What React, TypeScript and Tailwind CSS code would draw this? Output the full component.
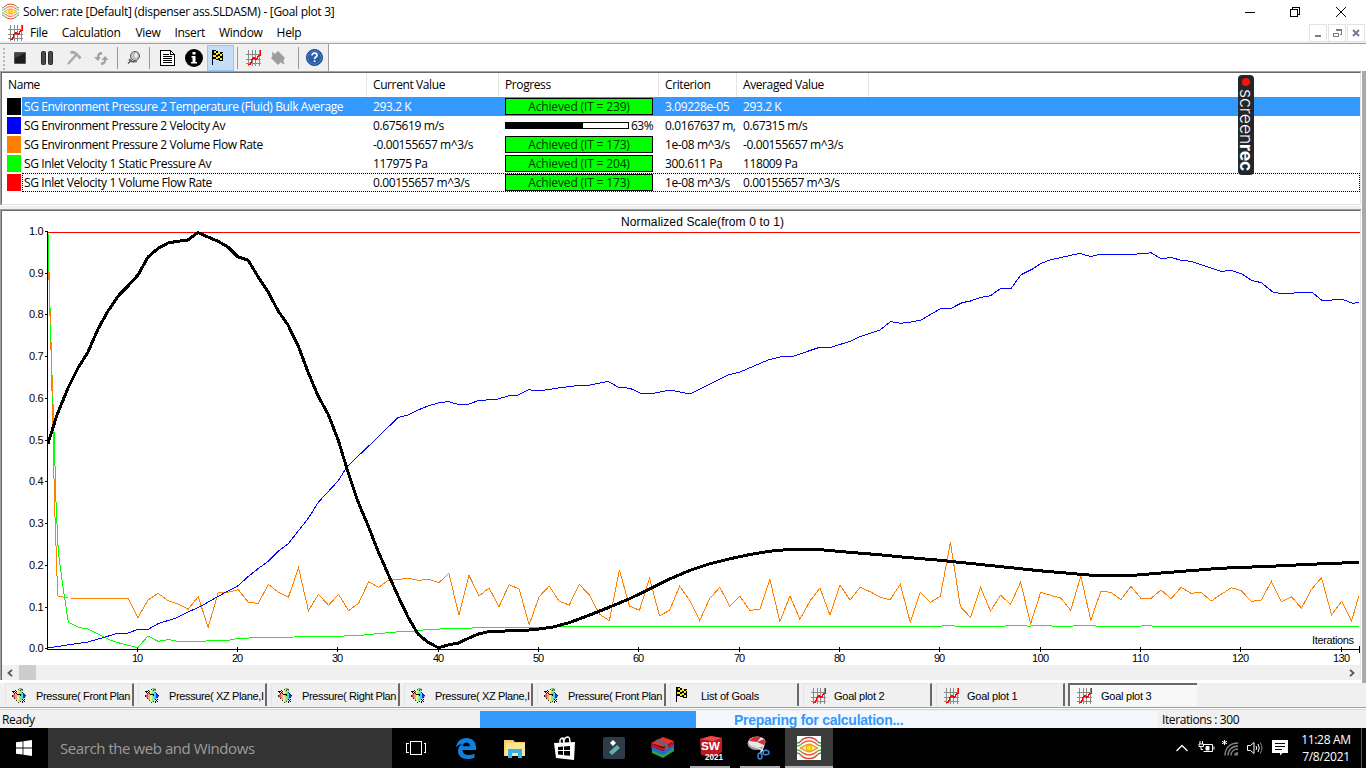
import React from "react";

type Pt = [number, number];

const x0 = 47.7;
const step = 10.03;
const iterX = (i: number) => x0 + (i - 1) * step;
const toPoints = (pts: Pt[]) => pts.map((p) => p.join(",")).join(" ");

const temperature: Pt[] = [
  [48, 443.5], [57, 415], [68, 388], [78, 368], [88, 352], [98, 329], [108, 311], [119, 295], [128, 286], [138, 275], [148, 257],
  [158, 248.5], [168, 243], [178, 241.2], [188, 240], [198, 232.5], [208, 237], [218, 241.3], [228, 247], [238, 257], [248, 260],
  [258, 276.7], [268, 291.7], [278, 310.7], [288, 325], [298.5, 346.7], [308, 372], [318, 395.7], [328.5, 415], [338.5, 441],
  [348, 472], [358, 501.7], [368.5, 526.7], [378, 551], [388.5, 575], [398.5, 597], [408.5, 618], [418, 634], [428, 642.3],
  [438.4, 647.7], [448, 645], [458.5, 643], [468, 638.5], [478.5, 634], [488.5, 631.7], [508, 630.9], [529, 630], [539, 629],
  [553, 627], [569, 622.7], [589, 615.3], [609, 607.3], [629, 599], [649, 589.3], [669, 579.3], [689, 570.7], [709, 564],
  [729, 559], [749, 554.7], [769, 551.3], [787, 549.6], [818, 549.5], [839, 551.4], [880, 554.8], [900, 556.8], [940, 560.3],
  [990, 565.5], [1040, 570.8], [1090, 575.1], [1133, 575.3], [1170, 572.3], [1220, 568.3], [1270, 566.3], [1310, 564.3], [1359, 562.3],
];

const velocity: Pt[] = [
  [48, 648], [67, 645], [88, 642], [117, 633.5], [127, 633.5], [137.5, 629.5], [148, 629.5], [158, 623.7], [177, 617.7], [188, 612],
  [200, 606.7], [211.7, 600], [226.7, 591.7], [237.7, 586], [248, 576.7], [258, 568.7], [267.7, 561.7], [277.7, 551.7], [288, 544],
  [308.3, 518.3], [318.3, 502.3], [338.3, 480.7], [347, 466.7], [375, 440], [398, 417.5], [408, 415], [418, 410], [428, 406],
  [438, 403], [448, 401.5], [458, 404.3], [468, 404.5], [478, 400.7], [498, 399], [508, 396], [518, 395], [529, 389.7], [539, 391],
  [558, 388], [578, 385.5], [590, 385], [608, 381.3], [618, 387], [630, 388.3], [640, 393], [650, 394], [662, 391.7], [670, 390],
  [690, 394], [700, 389], [728, 375], [740, 372], [768, 360], [780, 357], [793, 356.3], [801.7, 353.5], [810, 350.5], [819, 347.5],
  [830.4, 347.5], [851, 341], [860.3, 336.5], [880, 330], [890.6, 321.5], [900.3, 323.3], [910.8, 322], [921, 320], [940.7, 308.5],
  [950.8, 308.5], [962, 302.7], [970.6, 301], [980, 297.5], [990.4, 295.7], [1000.5, 288.5], [1011, 288.5], [1021, 274.7],
  [1032, 269.3], [1040.5, 263.7], [1049.8, 260], [1079.7, 253.3], [1091, 256.7], [1098.4, 254.5], [1126.4, 254.5], [1147, 253.5],
  [1150.7, 252.5], [1161, 258.7], [1171, 257.5], [1181.7, 260.4], [1191, 261.3], [1221, 271.4], [1231, 270.5], [1241.5, 273.7],
  [1251.6, 280.3], [1261.3, 282.7], [1273.3, 292.4], [1280.7, 293.4], [1312.5, 292.5], [1322, 300.5], [1342.4, 299.5], [1353, 303.3],
  [1359, 302.5],
];

const flowFrom9 = [
  598.3, 617.7, 600, 593.3, 600.7, 604, 609.3, 596.7, 627.3, 592.7, 592.3, 589.7, 602.3, 603.3, 584.3, 592.3, 597.3, 567.7, 610.7,
  594.3, 605.3, 594.3, 610.7, 603.3, 581.7, 587.3, 580, 579.3, 578.3, 580.3, 579.3, 582.7, 573.3, 615, 575.3, 596, 588, 606.7, 584.7,
  589, 624.7, 596.7, 586, 601.3, 605, 584.3, 595, 614, 620.7, 570, 606, 610.3, 578.3, 615.7, 610.3, 586.3, 600, 620.7, 598.7, 587.3,
  606, 596.3, 610.3, 609.3, 579.3, 621.7, 596, 619.3, 601, 588, 615.3, 585.3, 600, 587.3, 591.7, 597.3, 599.7, 584.3, 622.3, 592.3,
  602.3, 596.3, 542.3, 606.7, 617.3, 587.3, 611, 595.3, 604.3, 582.3, 623.7, 592.3, 595.3, 598, 610.3, 576, 620.3, 591.3, 592.3,
  599.7, 586.3, 598.3, 598.3, 590, 598.7, 587.3, 593.3, 592.3, 601, 594.3, 587.7, 590.7, 601.3, 600, 581.3, 602, 596.7, 608.3, 589.3,
  577.7, 614.7, 601.3, 620.7,
];

const flow: Pt[] = [
  [48, 233], [49, 280], [51, 350], [53, 430], [54.5, 502], [57.7, 596], [68, 598],
  ...flowFrom9.map((y, k): Pt => [iterX(9 + k), y]),
  [1359, 595.7],
];

const pressure: Pt[] = [
  [48, 233], [49.5, 290], [52, 375], [54.3, 440], [56, 502], [58.3, 551.7], [62, 580], [68.3, 622.3], [78.3, 627.3], [88.3, 629],
  [98.3, 634], [108.3, 639.3], [118.3, 642.7], [128.3, 645.3], [137.7, 647.7], [148, 636], [158.3, 641.4], [168.3, 639.5],
  [178.3, 641.5], [201.7, 641.5], [210, 640.5], [228, 640.5], [238.3, 638.4], [261.7, 637.5], [333, 636.4], [360, 635.4], [393, 632.2],
  [415, 631], [428, 629.4], [451.7, 628.6], [486.7, 627.6], [540, 627.3], [567, 626.5], [941, 626.5], [943, 625.5], [954, 625.5],
  [956, 626.5], [1004, 626.5], [1006, 625.5], [1026, 625.5], [1028, 626.5], [1034, 625.5], [1051, 625.5], [1053, 626.5],
  [1072, 626.5], [1074, 625.5], [1095, 625.5], [1097, 626.5], [1140, 626.5], [1142, 625.5], [1151, 625.5], [1153, 626.5], [1359, 626.5],
];

const yTicks = Array.from({ length: 11 }, (_, k) => ({ label: (1 - k / 10).toFixed(1), y: 231.3 + k * 41.75 }));
const xTicks = Array.from({ length: 13 }, (_, k) => ({ label: String((k + 1) * 10), x: Math.floor(137.2 + k * 100.33) + 0.5 }));

function GoalChart() {
  return (
    <svg width="1358" height="454" viewBox="2 211 1358 454" className="block shrink-0 font-['Liberation_Sans',sans-serif] text-[11px] tracking-normal">
      <text x="621" y="226" fontSize="12" textLength="163">Normalized Scale(from 0 to 1)</text>
      <g shapeRendering="crispEdges" fill="none" stroke="#000" strokeWidth="1">
        <path d="M47.5 231V649.5H1359.5M1359.5 646V653" />
        {yTicks.map((t) => <path key={t.label} d={`M45 ${Math.floor(t.y) + 0.5}H48`} />)}
        {xTicks.map((t) => <path key={t.label} d={`M${t.x} 647V652`} />)}
        <path d="M48 232.5H1360" stroke="#f00" />
        <polyline points={toPoints(flow)} stroke="#ff8000" />
        <polyline points={toPoints(pressure)} stroke="#0f0" />
        <path d="M49.5 281V287M50.500 312V323M51.500 344V359M52.500 378V395M53.500 412V424" stroke="#ff8000" />
        <polyline points={toPoints(velocity)} stroke="#00f" />
        <polyline points={toPoints(temperature)} strokeWidth="3" strokeLinejoin="round" />
      </g>
      {yTicks.map((t) => <text key={t.label} x="43.5" y={Math.floor(t.y) + 4} textAnchor="end" textLength="14.5">{t.label}</text>)}
      {xTicks.map((t) => (
        <text key={t.label} x={t.x} y="662" textAnchor="middle" textLength={t.label.length === 2 ? 11 : 17}>{t.label}</text>
      ))}
      <text x="1312" y="644" textLength="42">Iterations</text>
    </svg>
  );
}

function FlowEye({ size }: { size: number }) {
  return (
    <svg width={size} height={size} viewBox="0 0 24 24" fill="none" strokeWidth="1.4" className="shrink-0">
      <path d="M4 4.800Q7 1.500 12 1.500T20 4.800" stroke="#e03c2c" />
      <path d="M4 8.500Q7.500 5 12 5T20 8.500" stroke="#f0602c" />
      <path d="M3 12C7 11 8 8.300 12 8.300S17 11 21 12C17 13 16 15.700 12 15.700S7 13 3 12Z" stroke="#f09a2c" fill="#fff8c0" />
      <path d="M4 15.500Q7.500 19 12 19T20 15.500" stroke="#f0602c" />
      <path d="M4 19.200Q7 22.500 12 22.500T20 19.200" stroke="#e03c2c" />
      <path d="M0 7Q2.500 7 4 4.800M20 4.800Q21.500 7 24 7M0 17Q2.500 17 4 19.200M20 19.200Q21.500 17 24 17" stroke="#3c9a4c" />
      <path d="M0 10Q2.500 10 4 8.500M20 8.500Q21.500 10 24 10M0 14Q2.500 14 4 15.500M20 15.500Q21.500 14 24 14" stroke="#5cb04c" />
      <circle cx="12" cy="12" r="2.800" fill="#ffe600" stroke="#d0a800" strokeWidth=".8" />
    </svg>
  );
}

function PlotIcon() {
  return (
    <svg width="16" height="16" viewBox="0 0 16 16" fill="none" shapeRendering="crispEdges" className="shrink-0">
      <path d="M2.500 0V16M6.500 0V16M9.500 0V16M13.500 0V16M0 4.500H15M0 9.500H15M0 13.500H15" stroke="#8a8a8a" />
      <path d="M1.500 14.500H4.500V12.500H5.500V9.500H6.500V8.500H7.500V7.500H8.500V8.500H9.500V9.500H10.500V8.500H11.500V6.500H12.500V5.500H14.500V0" stroke="#f00" />
    </svg>
  );
}

function FlagIcon() {
  return (
    <svg width="16" height="16" viewBox="0 0 16 16" shapeRendering="crispEdges" className="shrink-0">
      <path d="M2 0H6V1H8V2H13V11H9V10H6V9H3V15H2Z" fill="#000" />
      <path d="M4 1h2v2H4zM8 2h2v2H8zM6 3h2v2H6zM10 4h2v2h-2zM3 5h1v2H3zM4 5h2v2H4zM8 6h2v2H8zM6 7h2v2H6zM10 8h2v2h-2zM12 3h1v1h-1z" fill="#f5e820" />
    </svg>
  );
}

function CutPlotIcon() {
  return (
    <svg width="16" height="16" viewBox="0 0 16 16" className="shrink-0">
      <path d="M1 8L4 5V11Z" fill="#f04848" />
      <path d="M4 5L6 3V13L4 11Z" fill="#ff9c88" />
      <path d="M6 3L8 1V15L6 13Z" fill="#f4f070" />
      <path d="M8 1L10 3V13L8 15Z" fill="#80f090" />
      <path d="M10 3L12 5V11L10 13Z" fill="#40d8f0" />
      <path d="M12 5L15 8L12 11Z" fill="#1830f0" />
      <g shapeRendering="crispEdges" fill="none" stroke="#000">
        <path d="M1 8L8 1L15 8L8 15Z" strokeWidth=".8" strokeDasharray="1.500 1.200" />
        <path d="M1 3.500H3.500L6 6H8.500L10 8M5 2L2 5M11 11L14 14M14 11L11 14.500" />
      </g>
      <path d="M8 0L10 2L12 3V1Z" fill="#187830" />
    </svg>
  );
}

const Sep = () => <div className="h-[22px] w-px shrink-0 bg-[#999]" />;

function ToolButton({ children, active = false }: { children: React.ReactNode; active?: boolean }) {
  return (
    <button className={`flex h-[26px] w-[27px] shrink-0 items-center justify-center ${active ? "border border-[#90c8f6] bg-[#c4def5]" : ""}`}>
      {children}
    </button>
  );
}

function Toolbar() {
  return (
    <div className="flex h-[27px] w-full shrink-0 bg-white">
      <div className="flex w-[329px] items-center border-r border-[#a0a0a0] bg-[#f0f0f0]">
        <svg width="6" height="26" className="shrink-0" shapeRendering="crispEdges">
          <path d="M4 3V26" stroke="#b8b8b8" strokeWidth="2" strokeDasharray="2 2" />
        </svg>
        <ToolButton>
          <svg width="12" height="12" viewBox="0 0 12 12"><rect width="12" height="12" rx="1" fill="#555" /><rect x="1" y="1" width="10" height="10" fill="#1c1c1c" /><path d="M1 1H11L1 6Z" fill="#444" /></svg>
        </ToolButton>
        <ToolButton>
          <svg width="12" height="14" viewBox="0 0 12 14" fill="#484848" stroke="#292929"><rect x=".5" y=".5" width="4" height="13" rx="1" /><rect x="7.500" y=".5" width="4" height="13" rx="1" /></svg>
        </ToolButton>
        <ToolButton>
          <svg width="16" height="16" viewBox="0 0 16 16" fill="none" stroke="#a8a8a8"><path d="M2 14L10 5" strokeWidth="2.400" /><path d="M4.500 2.500C8 1.500 10 3 14.500 8.500" strokeWidth="2.800" /></svg>
        </ToolButton>
        <ToolButton>
          <svg width="16" height="16" viewBox="0 0 16 16" fill="#a0a0a0"><path d="M9 2Q4 2 4 7H1L5 11L8 7H6Q6 4.500 9 4.500ZM8 15Q13 15 13 10H15.500L12 6L8.500 10H11Q11 12.500 8 12.500Z" /></svg>
        </ToolButton>
        <div className="w-[3px]" />
        <Sep />
        <div className="w-[3px]" />
        <ToolButton>
          <svg width="14" height="14" viewBox="0 0 14 14"><circle cx="8" cy="5" r="4.500" fill="#c8c8c8" stroke="#555" /><ellipse cx="9" cy="4.500" rx="2" ry="3" fill="#f4f4f4" stroke="#888" strokeWidth=".6" /><path d="M4.500 9L1 12.500M2 8Q5 12 10 10.500" stroke="#555" strokeWidth="1.300" fill="none" /></svg>
        </ToolButton>
        <div className="w-[2px]" />
        <Sep />
        <div className="w-[3px]" />
        <ToolButton>
          <svg width="15" height="16" viewBox="0 0 15 16" shapeRendering="crispEdges" className="ml-0.5"><path d="M.5 .5H10.500L14.500 4.500V15.500H.5Z" fill="#fff" stroke="#000" /><path d="M10.500 0V4.500H15M3 4.500H9M3 6.500H12M3 8.500H12M3 10.500H12M3 12.500H12" stroke="#000" fill="none" /></svg>
        </ToolButton>
        <ToolButton>
          <svg width="18" height="18" viewBox="0 0 18 18"><circle cx="9" cy="9" r="9" fill="#000" /><path d="M7.500 3H10.500V5.500H7.500ZM6.500 7H10.500V13H12V14.500H6V13H7.500V8.500H6.500Z" fill="#fff" /></svg>
        </ToolButton>
        <ToolButton active>
          <div className="mr-1.5"><FlagIcon /></div>
        </ToolButton>
        <div className="w-[3px]" />
        <Sep />
        <div className="w-[3px]" />
        <ToolButton><PlotIcon /></ToolButton>
        <div className="-ml-[3px] flex">
          <ToolButton>
            <svg width="16" height="16" viewBox="0 0 16 16" fill="#9d9d9d" stroke="#9d9d9d"><path d="M1.500 8L8 1.500L14.500 8L8 14.500Z" /><path d="M2 2.500L5 5M11 11.500L14 14M3 3V7M13 9V13" strokeWidth="1.500" /></svg>
          </ToolButton>
        </div>
        <div className="w-[7px]" />
        <Sep />
        <div className="w-[2px]" />
        <ToolButton>
          <svg width="17" height="17" viewBox="0 0 17 17"><circle cx="8.500" cy="8.500" r="8" fill="#2a5ca8" stroke="#173f80" /><circle cx="8.500" cy="8.500" r="6.800" fill="none" stroke="#6f9bd4" strokeWidth=".6" /><path d="M6 6.500Q6 4.200 8.500 4.200T11 6.500Q11 7.500 9.500 8.300Q8.700 8.800 8.700 10M8.600 11.300V13" fill="none" stroke="#fff" strokeWidth="1.700" /></svg>
        </ToolButton>
      </div>
    </div>
  );
}

interface Goal { color: string; name: string; current: string; progress: string; criterion: string; averaged: string }

const goals: Goal[] = [
  { color: "bg-black", name: "SG Environment Pressure 2 Temperature (Fluid) Bulk Average", current: "293.2 K", progress: "Achieved (IT = 239)", criterion: "3.09228e-05", averaged: "293.2 K" },
  { color: "bg-[#0000ff]", name: "SG Environment Pressure 2 Velocity Av", current: "0.675619 m/s", progress: "63%", criterion: "0.0167637 m,", averaged: "0.67315 m/s" },
  { color: "bg-[#ff8000]", name: "SG Environment Pressure 2 Volume Flow Rate", current: "-0.00155657 m^3/s", progress: "Achieved (IT = 173)", criterion: "1e-08 m^3/s", averaged: "-0.00155657 m^3/s" },
  { color: "bg-[#00ff00]", name: "SG Inlet Velocity 1 Static Pressure Av", current: "117975 Pa", progress: "Achieved (IT = 204)", criterion: "300.611 Pa", averaged: "118009 Pa" },
  { color: "bg-[#ff0000]", name: "SG Inlet Velocity 1 Volume Flow Rate", current: "0.00155657 m^3/s", progress: "Achieved (IT = 173)", criterion: "1e-08 m^3/s", averaged: "0.00155657 m^3/s" },
];

const headCell = "flex items-center border-r border-[#e5e5e5] pl-1.5";

function GoalTable() {
  return (
    <div className="h-[131px] shrink-0 bg-white tracking-[-0.4px]">
      <div className="flex h-6">
        <div className={`${headCell} w-[365px]`}>Name</div>
        <div className={`${headCell} w-[132px]`}>Current Value</div>
        <div className={`${headCell} w-[160px]`}>Progress</div>
        <div className={`${headCell} w-[78px]`}>Criterion</div>
        <div className={`${headCell} w-[132px]`}>Averaged Value</div>
      </div>
      {goals.map((g, i) => (
        <div key={g.name} className="flex h-[19px] pl-[5px]">
          <div className={`mt-px h-[17px] w-[14px] shrink-0 ${g.color}`} />
          <div className={`ml-px flex min-w-0 flex-1 items-center whitespace-nowrap ${i === 0 ? "bg-[#3399ff] text-white" : ""} ${i === 4 ? "outline outline-dotted outline-black -outline-offset-1" : ""}`}>
            <div className="w-[351px] shrink-0 pl-[2px]">{g.name}</div>
            <div className="w-[132px] shrink-0">{g.current}</div>
            <div className="w-[160px] shrink-0 text-black">
              {g.progress === "63%" ? (
                <div className="flex items-center">
                  <div className="h-[7px] w-[124px] border border-black bg-white"><div className="h-full w-[77px] bg-black" /></div>
                  <span className="ml-0.5 tracking-[-0.5px]">63%</span>
                </div>
              ) : (
                <div className="flex h-[17px] w-[148px] items-center justify-center border border-black bg-[#00ff00] tracking-[-0.15px] text-[#003800]">{g.progress}</div>
              )}
            </div>
            <div className="w-[78px] shrink-0">{g.criterion}</div>
            <div>{g.averaged}</div>
          </div>
        </div>
      ))}
    </div>
  );
}

const tabs = [
  { icon: "cut", label: "Pressure( Front Plan" },
  { icon: "cut", label: "Pressure( XZ Plane,I" },
  { icon: "cut", label: "Pressure( Right Plan" },
  { icon: "cut", label: "Pressure( XZ Plane,I" },
  { icon: "cut", label: "Pressure( Front Plan" },
  { icon: "flag", label: "List of Goals" },
  { icon: "plot", label: "Goal plot 2" },
  { icon: "plot", label: "Goal plot 1" },
  { icon: "plot", label: "Goal plot 3" },
];

function TabStrip() {
  return (
    <div className="flex h-[24px] shrink-0 gap-1 bg-[#f0f0f0] pl-[5px] font-['Liberation_Sans',sans-serif] text-[11px]">
      {tabs.map((t, i) => (
        <div
          key={i}
          className={`flex h-[23px] w-[129px] shrink-0 items-center whitespace-nowrap pt-px pl-[5px] ${
            i === 8 ? "ml-[-1px] border-t-2 border-l-2 border-[#696969] bg-[#f8f8f8]" : "border-t border-r-2 border-l border-t-[#e3e3e3] border-r-[#696969] border-l-[#e3e3e3]"
          }`}
        >
          {t.icon === "cut" ? <CutPlotIcon /> : t.icon === "flag" ? <span className="-mt-0.5 -ml-0.5 mr-0.5"><FlagIcon /></span> : <span className="ml-0.5"><PlotIcon /></span>}
          <span className={`${t.icon === "plot" ? (i === 8 ? "ml-2" : "ml-[7px]") : "ml-[9px]"} ${i < 5 ? "tracking-[-0.37px]" : "tracking-[-0.25px]"}`}>{t.label}</span>
        </div>
      ))}
    </div>
  );
}

function Taskbar() {
  return (
    <div className="flex h-10 shrink-0 bg-[#020203] text-white">
      <div className="flex w-12 items-center justify-center">
        <svg width="16" height="16" viewBox="0 0 16 16" fill="#fff"><path d="M0 2.300L6.600 1.400V7.600H0ZM7.400 1.300L16 0V7.600H7.400ZM0 8.400H6.600V14.600L0 13.700ZM7.400 8.400H16V16L7.400 14.700Z" /></svg>
      </div>
      <div className="flex w-[344px] items-center bg-[#333] pb-px pl-3 text-[15px] tracking-[-0.43px] text-[#9c9c9c]">Search the web and Windows</div>
      <div className="flex w-12 items-center justify-center">
        <svg width="20" height="14" viewBox="0 0 20 14" fill="none" stroke="#fff" shapeRendering="crispEdges"><path d="M4.500 .5H15.500V13.500H4.500ZM2.500 2.500H.5V11.500H2.500M17.500 2.500H19.500V11.500H17.500" /></svg>
      </div>
      <div className="flex w-[49px] items-center justify-center pl-0.5">
        <svg width="20" height="21" viewBox="0 0 20 21" fill="#0f7fe0"><path d="M0 9.500C1 3.500 4.500 0 10.500 0C16.500 0 20 4 20 9.500V12H6.500C6.700 15.500 9 17 12.500 17C15 17 17 16.300 18.500 15.400V19.500C16.500 20.500 14 21 11.500 21C5.500 21 2 17.500 2 13C2 9.500 4 7 7 5.700C4 6 1.500 7.300 0 9.500ZM6.700 8.300H13.800C13.800 5.900 12.500 4.600 10.400 4.600C8.500 4.600 7.100 6 6.700 8.300Z" /></svg>
      </div>
      <div className="flex w-[49px] items-center justify-center pl-0.5">
        <svg width="22" height="19" viewBox="0 0 22 19"><path d="M0 1H9L11 3H21V17H0Z" fill="#f7d06a" /><path d="M2 4H21V17H1Z" fill="#fde596" /><path d="M4 19V10H18V19H14V14H8V19Z" fill="#38b0e8" /></svg>
      </div>
      <div className="flex w-[49px] items-center justify-center pl-1">
        <svg width="22" height="24" viewBox="0 0 22 24"><path d="M6 7V4Q7 2 9 2L10 7M10 7V4Q11 1 14 1Q16 1 16 7" fill="none" stroke="#fff" strokeWidth="1.500" /><path d="M0 7L21 6L20 24L2 22Z" fill="#fff" /><path d="M4 11L9 10.500V14H4ZM10 10.400L16 10V14H10ZM4 15H9V19L4 18.500ZM10 15H16V19.800L10 19.200Z" fill="#000" /></svg>
      </div>
      <div className="flex w-[49px] items-center justify-center pl-1">
        <svg width="22" height="22" viewBox="0 0 22 22"><rect width="22" height="22" rx="2" fill="#2e3b48" /><path d="M7 6L10 3L13 6L10 9Z" fill="#fff" /><path d="M6 15L14 8L17 11L9 18Z" fill="#5fb5a5" /></svg>
      </div>
      <div className="flex w-[49px] items-center justify-center pl-1">
        <svg width="24" height="22" viewBox="0 0 24 22"><path d="M1 12L12 16L23 9V14L12 21L1 16Z" fill="#28a838" /><path d="M0 9L12 14L23 7V11L12 18L1 13Z" fill="#2468d8" /><path d="M0 6L12 11L23 4V8L12 14L1 10Z" fill="#b81820" /><path d="M0 6L12 0L23 4L12 10Z" fill="#e83038" /><path d="M7 2L17 7V12L14 13V9L4 4Z" fill="#666" /></svg>
      </div>
      <div className="flex w-[49px] flex-col items-center justify-end">
        <svg width="24" height="26" viewBox="0 0 24 26" className="mb-1 ml-0.5 tracking-normal"><path d="M1 3L12 0L23 2V16L15 21L2 19Z" fill="#c01820" /><path d="M1 3L12 0L23 2L14 5Z" fill="#f04848" /><text x="2" y="14" fontSize="11" fontWeight="bold" fill="#fff" textLength="19" lengthAdjust="spacingAndGlyphs" fontFamily="Liberation Sans">SW</text><text x="6" y="24" fontSize="9" fontWeight="bold" fill="#fff" textLength="18" lengthAdjust="spacingAndGlyphs" fontFamily="Liberation Sans">2021</text></svg>
        <div className="h-0.5 w-10 bg-[#aaa]" />
      </div>
      <div className="flex w-[51px] flex-col items-center justify-end">
        <svg width="24" height="24" viewBox="0 0 24 24" className="mb-1.5 -ml-0.5"><ellipse cx="9" cy="7.500" rx="8.500" ry="6.500" fill="#a0a0a8" /><ellipse cx="10" cy="6" rx="8.500" ry="5.500" fill="#e8e8e8" /><path d="M10 6L2 5Q6 -1 14 1ZM10 6L17 3Q19 6 17 9Z" fill="#d83038" /><path d="M5 9L17 15M17 9L13 18" stroke="#ddd" strokeWidth="1.600" /><ellipse cx="19" cy="16.500" rx="3" ry="2.300" fill="none" stroke="#3888d8" strokeWidth="1.500" /><ellipse cx="13" cy="20" rx="2" ry="3" fill="none" stroke="#3888d8" strokeWidth="1.500" /></svg>
        <div className="h-0.5 w-10 bg-[#aaa]" />
      </div>
      <div className="flex w-12 flex-col items-center justify-end bg-[#3c3c3c]">
        <div className="mb-1.5 bg-white"><FlowEye size={24} /></div>
        <div className="h-0.5 w-12 bg-[#b8b8b8]" />
      </div>
      <div className="ml-auto flex items-center">
        <svg width="12" height="8" viewBox="0 0 12 8" fill="none" stroke="#fff" strokeWidth="1.300"><path d="M.5 7L6 1.500L11.500 7" /></svg>
        <svg width="17" height="14" viewBox="0 0 17 14" className="ml-[10px]" fill="none" stroke="#fff"><path d="M6 3.500H14.500V10.500H5.500M16 5.500V8.500M2 0V3M4.500 0V3M1 3H5.500V5.500H1ZM3 6V8.500H5" /><path d="M8 5.500h3V9H8Z" fill="#fff" /></svg>
        <svg width="17" height="17" viewBox="0 0 17 17" className="ml-[7px]" fill="none"><path d="M2.500 0V5M0 1.200L5 3.800M5 1.200L0 3.800" stroke="#fff" /><path d="M3 15.500C3 8 8 3 16 3M6 15.500C6 10 10 6 16 6M9 15.500C9 11.500 12 9 16 9" stroke="#888" strokeWidth="1.300" /><path d="M12 15.500Q12 12 16 12V15.500Z" fill="#777" /></svg>
        <svg width="17" height="14" viewBox="0 0 17 14" className="ml-2" fill="none" stroke="#fff"><path d="M.5 4.500H3.500L7 1.500V12.500L3.500 9.500H.5Z" /><path d="M9 5Q10.500 7 9 9M11 3Q13.500 7 11 11" /><path d="M13 1.500Q17 7 13 12.500" stroke="#888" /></svg>
        <svg width="16" height="16" viewBox="0 0 16 16" className="ml-2"><path d="M0 0H16V13H10.500L8 15.500V13H0Z" fill="#fff" /><path d="M3 3.500H13M3 6.500H13M3 9.500H10" stroke="#000" /></svg>
        <div className="ml-[13px] flex w-[50px] flex-col items-center text-[12px] leading-[17px] tracking-[-0.3px] whitespace-nowrap">
          <div>11:28 AM</div>
          <div>7/8/2021</div>
        </div>
        <div className="ml-[10px] h-10 w-px bg-[#555]" />
        <div className="w-1" />
      </div>
    </div>
  );
}

const childButton = "flex h-[18px] w-[18px] items-center justify-center border border-[#e3e3e3]";

export default function App() {
  return (
    <div className="relative flex h-[768px] w-[1366px] flex-col overflow-hidden bg-white font-['Open_Sans','Noto_Sans',sans-serif] text-[12px] leading-4 tracking-[-0.3px] text-black">
      <div className="flex h-[23px] shrink-0 items-center pl-0.5">
        <FlowEye size={17} />
        <span className="ml-1">Solver: rate [Default] (dispenser ass.SLDASM) - [Goal plot 3]</span>
        <div className="ml-auto flex items-center pr-5">
          <svg width="10" height="10" shapeRendering="crispEdges"><path d="M0 5.500H10" stroke="#000" /></svg>
          <svg width="10" height="10" className="ml-[35px]" fill="none" stroke="#000" shapeRendering="crispEdges"><path d="M.5 2.500H7.500V9.500H.5ZM2.500 2V.5H9.500V7.500H8" /></svg>
          <svg width="10" height="10" className="ml-9" stroke="#000"><path d="M0 0L10 10M10 0L0 10" /></svg>
        </div>
      </div>
      <div className="flex h-[20px] shrink-0 items-center border-b-2 border-[#f0f0f0] pt-0.5 pl-2">
        <div className="w-[14px]"><PlotIcon /></div>
        <nav className="ml-2 flex gap-[14px] whitespace-nowrap">
          <span>File</span>
          <span>Calculation</span>
          <span className="ml-px">View</span>
          <span>Insert</span>
          <span>Window</span>
          <span>Help</span>
        </nav>
        <div className="ml-auto flex gap-px pr-px">
          <div className={childButton}><svg width="6" height="8"><path d="M0 7H6" stroke="#708090" strokeWidth="2" /></svg></div>
          <div className={childButton}><svg width="9" height="8" fill="none" stroke="#708090" shapeRendering="crispEdges"><path d="M3 1H8.500V5.500H7M0 4H5.500V7.500H.5V4" /><path d="M2.500 1H9" strokeWidth="2" /></svg></div>
          <div className={childButton}><svg width="8" height="8" stroke="#708090" strokeWidth="2"><path d="M1 1L7 7M7 1L1 7" /></svg></div>
        </div>
      </div>
      <div className="h-px shrink-0 bg-[#a0a0a0]" />
      <Toolbar />
      <div className="flex h-[612px] shrink-0">
        <div className="flex w-[1361px] flex-col">
          <div className="flex flex-col border-t border-l border-[#a0a0a0]">
            <div className="flex flex-col border-t border-r border-b border-l border-t-[#696969] border-r-[#e3e3e3] border-b-[#e3e3e3] border-l-[#696969]">
              <GoalTable />
            </div>
          </div>
          <div className="h-1 shrink-0 border-t border-white bg-[#f0f0f0]" />
          <div className="flex flex-col border-t border-l border-[#a0a0a0]">
            <div className="flex flex-col border-t border-r border-l border-t-[#696969] border-r-[#e3e3e3] border-l-[#696969]">
              <GoalChart />
              <div className="flex h-[15px] w-full items-center bg-[#f0f0f0] pl-[5px]">
                <svg width="6" height="8" fill="none" stroke="#555" strokeWidth="1.800"><path d="M5 .8L1.500 4L5 7.200" /></svg>
                <div className="ml-[6px] h-[15px] w-[17px] bg-[#cdcdcd]" />
                <svg width="6" height="8" fill="none" stroke="#555" strokeWidth="1.800" className="mr-[5px] ml-auto"><path d="M1 .8L4.500 4L1 7.200" /></svg>
              </div>
            </div>
          </div>
        </div>
        <div className="ml-px flex-1 bg-[#a9a9a9]" />
      </div>
      <TabStrip />
      <div className="h-0.5 shrink-0 border-t border-[#a0a0a0] bg-white" />
      <div className="flex h-[19px] shrink-0 items-center border-t border-[#d8d8d8] bg-[#f0f0f0] pt-px">
        <div className="w-[480px] pl-0.5">Ready</div>
        <div className="flex h-full w-[678px] items-center bg-[#f4f8fe]">
          <div className="h-full w-[216px] bg-[#3399ff]" />
          <div className="ml-[38px] font-['Liberation_Sans',sans-serif] text-[14px] font-bold tracking-[-0.26px] text-[#3399ff]">Preparing for calculation...</div>
        </div>
        <div className="ml-1 tracking-[-0.4px]">Iterations : 300</div>
      </div>
      <Taskbar />
      <div className="absolute top-[75px] left-[1238px] flex h-[100px] w-4 flex-col items-center rounded-[4px] bg-[#24262c] text-white">
        <div className="mt-[3px] h-2 w-2 shrink-0 rounded-full bg-[#ff1010]" />
        <div className="mt-[3px] flex font-['Inter',sans-serif] text-[17.5px] leading-4 tracking-normal [writing-mode:vertical-rl]">
          <span className="font-light">screen</span>
          <span className="font-bold">rec</span>
        </div>
      </div>
    </div>
  );
}
